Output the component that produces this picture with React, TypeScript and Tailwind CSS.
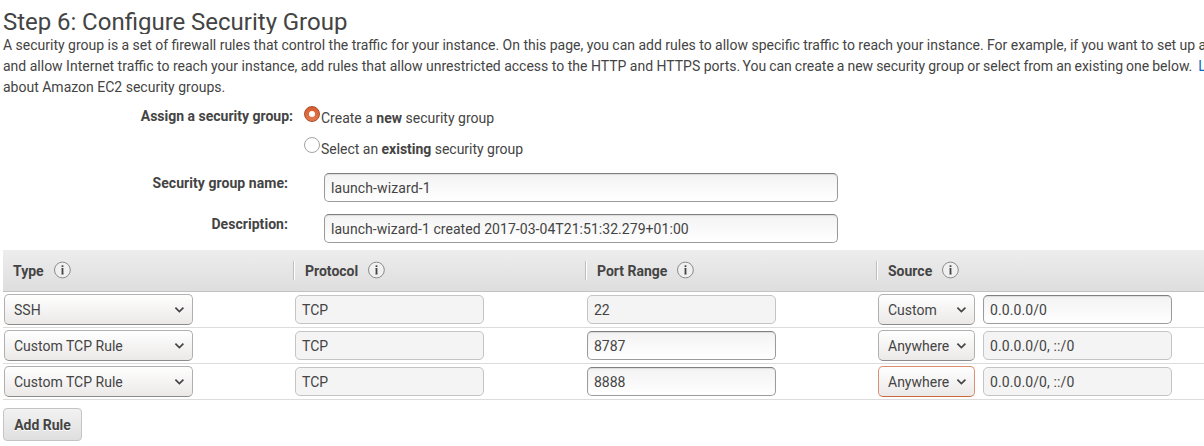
import type { ReactNode } from "react";

const columns = ["Type", "Protocol", "Port Range", "Source"];

const rules = [
  { type: "SSH", port: "22", portLocked: true, source: "Custom", cidr: "0.0.0.0/0", cidrLocked: false, focused: false },
  { type: "Custom TCP Rule", port: "8787", portLocked: false, source: "Anywhere", cidr: "0.0.0.0/0, ::/0", cidrLocked: true, focused: false },
  { type: "Custom TCP Rule", port: "8888", portLocked: false, source: "Anywhere", cidr: "0.0.0.0/0, ::/0", cidrLocked: true, focused: true },
];

function InfoIcon() {
  return (
    <svg className="-mt-px ml-[9px] size-[18px] shrink-0" viewBox="0 0 18 18" fill="none">
      <circle cx="9.4" cy="9" r="7.9" fill="#f0f0f0" stroke="#8b8b8b" />
      <path d="M8 7.5H9.5M8 13H11" stroke="#aaa" strokeWidth=".7" />
      <path d="M9.5 7V13.4" stroke="#444" strokeWidth="1.8" />
      <rect x="8.6" y="4.3" width="1.8" height="1.7" fill="#444" />
    </svg>
  );
}

function Field({ locked, className, children }: { locked?: boolean; className: string; children: ReactNode }) {
  const look = locked
    ? "border-[#c4c4c4] bg-[#f4f4f4]"
    : "border-[#9b9b9b] border-t-[#7f7f7f] bg-linear-to-b from-[#f3f3f3] to-white shadow-[inset_0_1px_1px_#dcdcdc]";
  return (
    <div className={`flex h-[29px] shrink-0 items-center rounded-[5px] border pl-1.5 pt-[2px] ${look} ${className}`}>
      {children}
    </div>
  );
}

function Select({ focused, className, children }: { focused?: boolean; className: string; children: ReactNode }) {
  const edge = focused ? "border-[#dc8f6e] border-b-[#c9683f]" : "border-[#b0b0b0] border-b-[#8b8b8b]";
  return (
    <div className={`flex h-[31px] shrink-0 items-center justify-between rounded-[5px] border bg-linear-to-b from-white to-[#ebe9e8] pl-[9px] pr-2 ${edge} ${className}`}>
      <span className="pt-[2px]">{children}</span>
      <svg className="h-[6px] w-[10px]" viewBox="0 0 10 6" fill="none">
        <path d="M1.4 .6 5.4 4.5 9.4 .6" stroke="#444" strokeWidth="1.7" />
      </svg>
    </div>
  );
}

export default function App() {
  return (
    <div className="h-[446px] w-[1204px] overflow-hidden bg-white pl-[3px] font-['Roboto',sans-serif] text-[14px] text-[#444]">
      <h1 className="h-[34px] overflow-hidden pt-[7px] text-[24px] leading-[30px] [word-spacing:-0.2px]">Step 6: Configure Security Group</h1>
      <div className="h-[64px] whitespace-nowrap pt-px leading-[21px]">
        <p className="[word-spacing:-0.05px]">
          A security group is a set of firewall rules that control the traffic for your instance. On this page, you can add rules to allow specific traffic to reach your instance. For example, if you want to set up a
        </p>
        <p>
          and allow Internet traffic to reach your instance, add rules that allow unrestricted access to the HTTP and HTTPS ports.{" "}
          <span className="-ml-[1.2px] [word-spacing:-0.46px]">You can create a new security group or select from an existing one below.</span>
          <a className="ml-[6px] text-[#0a66c2]">Learn more</a>
        </p>
        <p>about Amazon EC2 security groups.</p>
      </div>

      <div className="flex h-[72px]">
        <div className="w-[290px] pt-[8px] text-right font-bold leading-[20px]">Assign a security group:</div>
        <div className="ml-[11px] pt-[8px]">
          <div className="flex h-[31px]">
            <span className="flex size-4 items-center justify-center rounded-full border border-[#a94d2b] bg-linear-to-b from-[#d85c2e] to-[#e17a4f]">
              <span className="size-[6px] rounded-full bg-white" />
            </span>
            <span className="ml-px pt-[2px] leading-[20px]">Create a <b>new</b> security group</span>
          </div>
          <div className="flex h-[31px]">
            <span className="size-4 rounded-full border border-[#a3a3a3] bg-white" />
            <span className="ml-px pt-[2px] leading-[20px] tracking-[-0.02px]">Select an <b>existing</b> security group</span>
          </div>
        </div>
      </div>
      <div className="flex h-[41px] pt-[3px]">
        <div className="w-[285px] text-right font-bold leading-[20px] tracking-[0.05px]">Security group name:</div>
        <Field className="ml-9 w-[514px] tracking-[0.1px]">launch-wizard-1</Field>
      </div>
      <div className="flex h-[39px] pt-[3px]">
        <div className="w-[285px] text-right font-bold leading-[20px] tracking-[0.05px]">Description:</div>
        <Field className="ml-9 w-[514px] tracking-[0.05px]">launch-wizard-1 created 2017-03-04T21:51:32.279+01:00</Field>
      </div>

      <div className="grid h-[42px] grid-cols-[290px_292px_291px_328px] items-center border-b border-[#c2c2c2] bg-linear-to-b from-[#ededed] to-[#dedede] font-bold">
        {columns.map((name, i) => (
          <div
            key={name}
            className={`flex h-[19px] items-center ${i === 0 ? "pl-[10px]" : "border-l border-[#bdbdbd] pl-[11px] shadow-[inset_1px_0_0_#fff]"}`}
          >
            <span className="pt-[2px]">{name}</span>
            <InfoIcon />
          </div>
        ))}
      </div>
      {rules.map((rule, i) => (
        <div key={i} className="grid h-9 grid-cols-[290px_292px_291px_328px] items-center border-b border-[#dcdcdc]">
          <Select className="ml-px w-[189px]">{rule.type}</Select>
          <Field locked className="ml-[2px] w-[189px]">TCP</Field>
          <Field locked={rule.portLocked} className="ml-[2px] w-[189px]">{rule.port}</Field>
          <div className="flex items-center pl-[2px]">
            <Select focused={rule.focused} className="w-[97px]">{rule.source}</Select>
            <Field locked={rule.cidrLocked} className="ml-2 w-[189px] tracking-[0.1px]">{rule.cidr}</Field>
          </div>
        </div>
      ))}

      <button className="mt-2 flex h-[33px] w-[79px] items-center justify-center rounded-[4px] border border-[#c4c4c4] bg-linear-to-b from-[#f2f2f2] to-[#dfdfdf] pt-[2px] font-bold [text-shadow:0_1px_0_#fff]">
        Add Rule
      </button>
    </div>
  );
}
